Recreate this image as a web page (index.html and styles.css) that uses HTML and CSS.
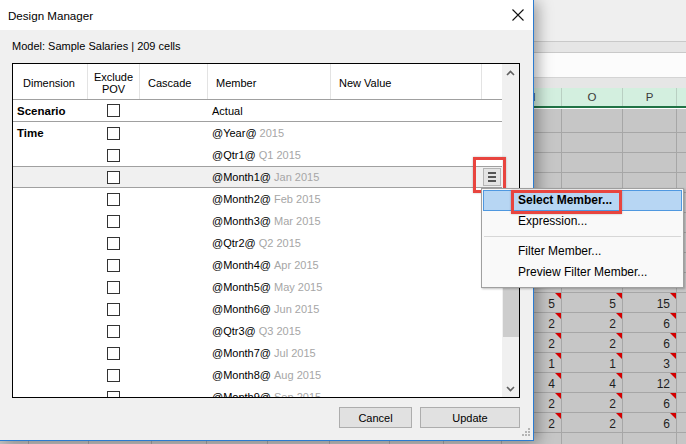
FILE: index.html
```html
<!DOCTYPE html>
<html>
<head>
<meta charset="utf-8">
<link rel="stylesheet" href="styles.css">
</head>
<body>
<div class="sheet">
  <div class="ribbon"></div>
  <div class="strip"></div>
  <div class="fbar"></div>
  <div class="strip2"></div>
  <div class="colhdr">
    <i class="rh"></i><i>F</i><i>G</i><i>H</i><i>I</i><i>J</i><i>K</i><i>L</i><i>M</i><i>N</i><i>O</i><i>P</i><i></i>
  </div>
  <div class="cells">
    <i></i><i></i><i></i><i></i><i></i><i></i><i></i><i></i><i></i><i></i><i></i><i></i><i></i>
    <i></i><i></i><i></i><i></i><i></i><i></i><i></i><i></i><i></i><i></i><i></i><i></i><i></i>
    <i></i><i></i><i></i><i></i><i></i><i></i><i></i><i></i><i></i><i></i><i></i><i></i><i></i>
    <i></i><i></i><i></i><i></i><i></i><i></i><i></i><i></i><i></i><i></i><i></i><i></i><i></i>
    <i></i><i></i><i></i><i></i><i></i><i></i><i></i><i></i><i></i><i></i><i></i><i></i><i></i>
    <i></i><i></i><i></i><i></i><i></i><i></i><i></i><i></i><i></i><i></i><i></i><i></i><i></i>
    <i></i><i></i><i></i><i></i><i></i><i></i><i></i><i></i><i></i><i></i><i></i><i></i><i></i>
    <i></i><i></i><i></i><i></i><i></i><i></i><i></i><i></i><i></i><i></i><i></i><i></i><i></i>
    <i></i><i></i><i></i><i></i><i></i><i></i><i></i><i></i><i></i><i class="n">10</i><i class="n">10</i><i class="n">30</i><i></i>
    <i></i><i></i><i></i><i></i><i></i><i></i><i></i><i></i><i></i><i class="n">5</i><i class="n">5</i><i class="n">15</i><i></i>
    <i></i><i></i><i></i><i></i><i></i><i></i><i></i><i></i><i></i><i class="n">2</i><i class="n">2</i><i class="n">6</i><i></i>
    <i></i><i></i><i></i><i></i><i></i><i></i><i></i><i></i><i></i><i class="n">2</i><i class="n">2</i><i class="n">6</i><i></i>
    <i></i><i></i><i></i><i></i><i></i><i></i><i></i><i></i><i></i><i class="n">1</i><i class="n">1</i><i class="n">3</i><i></i>
    <i></i><i></i><i></i><i></i><i></i><i></i><i></i><i></i><i></i><i class="n">4</i><i class="n">4</i><i class="n">12</i><i></i>
    <i></i><i></i><i></i><i></i><i></i><i></i><i></i><i></i><i></i><i class="n">2</i><i class="n">2</i><i class="n">6</i><i></i>
    <i></i><i></i><i></i><i></i><i></i><i></i><i></i><i></i><i></i><i class="n">2</i><i class="n">2</i><i class="n">6</i><i></i>
    <i></i><i></i><i></i><i></i><i></i><i></i><i></i><i></i><i></i><i></i><i></i><i></i><i></i>
  </div>
</div>

<div class="dialog">
  <div class="titlebar">
    <span>Design Manager</span>
    <svg class="close" width="12" height="12" viewBox="0 0 12 12"><path d="M0.5 0.5 L11.5 11.5 M11.5 0.5 L0.5 11.5" stroke="#111" stroke-width="1.1" fill="none"/></svg>
  </div>
  <div class="dbody">
    <div class="model">Model: Sample Salaries | 209 cells</div>
    <div class="tablebox">
      <div class="list">
        <div class="hdr">
          <div class="c1 hc hc1">Dimension</div>
          <div class="c2 hc hcc">Exclude<br>POV</div>
          <div class="c3 hc">Cascade</div>
          <div class="c4 hc">Member</div>
          <div class="c5 hc">New Value</div>
          <div class="c6 hc"></div>
        </div>
        <div class="row sep"><div class="c1 dim">Scenario</div><div class="c2"><span class="cb"></span></div><div class="c3"></div><div class="c4 mem">Actual</div></div>
        <div class="row"><div class="c1 dim">Time</div><div class="c2"><span class="cb"></span></div><div class="c3"></div><div class="c4 mem">@Year@ <span class="dt">2015</span></div></div>
        <div class="row"><div class="c1"></div><div class="c2"><span class="cb"></span></div><div class="c3"></div><div class="c4 mem">@Qtr1@ <span class="dt">Q1 2015</span></div></div>
        <div class="row sel"><div class="c1"></div><div class="c2"><span class="cb"></span></div><div class="c3"></div><div class="c4 mem">@Month1@ <span class="dt">Jan 2015</span></div><div class="c5"></div><div class="c6"><span class="mbtn"><b></b><b></b><b></b></span></div></div>
        <div class="row"><div class="c1"></div><div class="c2"><span class="cb"></span></div><div class="c3"></div><div class="c4 mem">@Month2@ <span class="dt">Feb 2015</span></div></div>
        <div class="row"><div class="c1"></div><div class="c2"><span class="cb"></span></div><div class="c3"></div><div class="c4 mem">@Month3@ <span class="dt">Mar 2015</span></div></div>
        <div class="row"><div class="c1"></div><div class="c2"><span class="cb"></span></div><div class="c3"></div><div class="c4 mem">@Qtr2@ <span class="dt">Q2 2015</span></div></div>
        <div class="row"><div class="c1"></div><div class="c2"><span class="cb"></span></div><div class="c3"></div><div class="c4 mem">@Month4@ <span class="dt">Apr 2015</span></div></div>
        <div class="row"><div class="c1"></div><div class="c2"><span class="cb"></span></div><div class="c3"></div><div class="c4 mem">@Month5@ <span class="dt">May 2015</span></div></div>
        <div class="row"><div class="c1"></div><div class="c2"><span class="cb"></span></div><div class="c3"></div><div class="c4 mem">@Month6@ <span class="dt">Jun 2015</span></div></div>
        <div class="row"><div class="c1"></div><div class="c2"><span class="cb"></span></div><div class="c3"></div><div class="c4 mem">@Qtr3@ <span class="dt">Q3 2015</span></div></div>
        <div class="row"><div class="c1"></div><div class="c2"><span class="cb"></span></div><div class="c3"></div><div class="c4 mem">@Month7@ <span class="dt">Jul 2015</span></div></div>
        <div class="row"><div class="c1"></div><div class="c2"><span class="cb"></span></div><div class="c3"></div><div class="c4 mem">@Month8@ <span class="dt">Aug 2015</span></div></div>
        <div class="row"><div class="c1"></div><div class="c2"><span class="cb"></span></div><div class="c3"></div><div class="c4 mem">@Month9@ <span class="dt">Sep 2015</span></div></div>
      </div>
      <div class="sb">
        <div class="arrow"><svg width="9" height="6" viewBox="0 0 9 6"><path d="M1 5 L4.5 1.5 L8 5" stroke="#606060" stroke-width="1.6" fill="none"/></svg></div>
        <div class="track1"></div>
        <div class="thumb"></div>
        <div class="track2"></div>
        <div class="arrow"><svg width="9" height="6" viewBox="0 0 9 6"><path d="M1 1 L4.5 4.5 L8 1" stroke="#606060" stroke-width="1.6" fill="none"/></svg></div>
      </div>
    </div>
    <div class="btns">
      <button class="btn cancel">Cancel</button>
      <button class="btn update">Update</button>
    </div>
  </div>
  <svg class="grip" width="9" height="9" viewBox="0 0 9 9">
    <rect x="6" y="0" width="2" height="2" fill="#b5b5b5"/>
    <rect x="3" y="3" width="2" height="2" fill="#b5b5b5"/>
    <rect x="6" y="3" width="2" height="2" fill="#b5b5b5"/>
    <rect x="0" y="6" width="2" height="2" fill="#b5b5b5"/>
    <rect x="3" y="6" width="2" height="2" fill="#b5b5b5"/>
    <rect x="6" y="6" width="2" height="2" fill="#b5b5b5"/>
  </svg>
</div>

<div class="redbox rb1"></div>

<div class="menu">
  <div class="item active">Select Member...</div>
  <div class="item">Expression...</div>
  <div class="msep"></div>
  <div class="item">Filter Member...</div>
  <div class="item">Preview Filter Member...</div>
</div>
<div class="redbox rb2"></div>
</body>
</html>
```

FILE: styles.css
```css
* { box-sizing: border-box; }
html, body { margin: 0; padding: 0; }
body {
  width: 686px;
  height: 444px;
  overflow: hidden;
  position: relative;
  font-family: "Liberation Sans", Arial, sans-serif;
  font-size: 11px;
  color: #000;
  background: #c6c6c6;
}

/* ---------- spreadsheet behind ---------- */
.sheet { width: 686px; }
.ribbon { height: 42px; background: #efefef; border-bottom: 1px solid #c9c9c9; }
.strip { height: 11px; background: #e6e6e6; border-bottom: 1px solid #c9c9c9; }
.fbar { height: 25px; background: #fcfcfc; border-bottom: 1px solid #d4d4d4; }
.strip2 { height: 10px; background: #e6e6e6; }
.colhdr, .cells {
  display: grid;
  grid-template-columns: 29px 60px 63px 55px 61px 62px 60px 54px 58px 60px 61px 54px 60px;
}
.colhdr {
  height: 20px;
  background: #d3efdf;
  border-bottom: 2px solid #217346;
}
.colhdr i {
  font-style: normal;
  font-size: 11.5px;
  color: #3a3a3a;
  text-align: center;
  line-height: 18px;
  border-right: 1px solid #b9cfc2;
}
.colhdr .rh { background: #e6e6e6; }
.cells {
  border-top: 1px solid #ffffff;
  grid-template-rows: 24px;
  grid-auto-rows: 20px;
}
.cells i {
  font-style: normal;
  background: #c6c6c6;
  border-right: 1px solid #a6a6a6;
  border-bottom: 1px solid #a6a6a6;
}
.cells .n {
  position: relative;
  text-align: right;
  padding: 3px 6px 0 0;
  font-size: 12px;
  line-height: 17px;
  color: #1e1e1e;
}
.cells .n::after {
  content: "";
  position: absolute;
  top: 0;
  right: 0;
  border-left: 6px solid transparent;
  border-top: 6px solid #d40000;
}

/* ---------- dialog ---------- */
.dialog {
  position: absolute;
  left: 0;
  top: 0;
  width: 534px;
  height: 441px;
  background: #f0f0f0;
  border-right: 1px solid #2b7bd0;
  border-bottom: 1px solid #2b7bd0;
  box-shadow: 4px 2px 14px rgba(0, 0, 0, 0.35);
  display: flex;
  flex-direction: column;
}
.titlebar {
  height: 30px;
  background: #fff;
  display: flex;
  align-items: center;
  justify-content: space-between;
  padding: 0 9px 0 8px;
  font-size: 11.6px;
}
.close { display: block; }
.dbody {
  flex: 1;
  display: flex;
  flex-direction: column;
  padding: 0 13px 0 12px;
}
.model {
  padding-top: 10px;
  height: 23px;
  line-height: 13px;
}
.tablebox {
  margin-top: 10px;
  height: 335px;
  border: 1px solid #000;
  background: #fff;
  display: flex;
}
.list {
  width: 490px;
  overflow: hidden;
}
.hdr {
  display: flex;
  height: 36px;
  border-bottom: 1px solid #a0a0a0;
}
.c1 { width: 75px; flex: none; }
.c2 { width: 52px; flex: none; }
.c3 { width: 68px; flex: none; }
.c4 { width: 123px; flex: none; }
.c5 { width: 151px; flex: none; }
.c6 { width: 21px; flex: none; }
.hc {
  border-right: 1px solid #e3e3e3;
  display: flex;
  align-items: center;
  padding: 3px 0 0 8px;
  line-height: 12px;
}
.hc1 { padding-left: 10px; }
.hcc { justify-content: center; text-align: center; padding-left: 0; }
.row {
  display: flex;
  align-items: center;
  height: 22px;
  white-space: nowrap;
}
.row.sep { border-bottom: 1px solid #a0a0a0; }
.row.sel {
  background: #f0f0f0;
  border-top: 1px solid #a0a0a0;
  border-bottom: 1px solid #a0a0a0;
}
.row > div { display: flex; align-items: center; }
.dim { font-weight: bold; padding-left: 4px; font-size: 11.5px; }
.mem { padding-left: 4px; }
.dt { color: #a6a6a6; margin-left: 3px; }
.cb {
  display: block;
  width: 13px;
  height: 13px;
  margin-left: 19px;
  border: 1px solid #333;
  background: #fff;
}
.mbtn {
  display: flex;
  flex-direction: column;
  align-items: center;
  gap: 2px;
  width: 18px;
  height: 18px;
  margin-left: 1px;
  padding-top: 3px;
  background: #e4e4e4;
  border: 1px solid #b4b4b4;
}
.mbtn b {
  display: block;
  width: 8px;
  height: 2px;
  background: #555;
}
.sb {
  width: 17px;
  background: #f0f0f0;
  display: flex;
  flex-direction: column;
}
.arrow {
  height: 17px;
  display: flex;
  align-items: center;
  justify-content: center;
}
.arrow svg { display: block; }
.track1 { height: 109px; }
.thumb { height: 147px; margin-left: 1px; background: #cdcdcd; }
.track2 { flex: 1; }
.btns {
  display: flex;
  justify-content: flex-end;
  gap: 8px;
  margin-top: 9px;
}
.btn {
  height: 21px;
  padding: 0;
  background: #e1e1e1;
  border: 1px solid #adadad;
  font-family: "Liberation Sans", Arial, sans-serif;
  font-size: 11px;
  color: #000;
}
.cancel { width: 73px; }
.update { width: 100px; }
.grip { position: absolute; right: 2px; bottom: 3px; }

/* ---------- overlays ---------- */
.redbox {
  position: absolute;
  border: 3px solid #e8453f;
  box-shadow: 0 0 2px rgba(0, 0, 0, 0.25);
}
.rb1 { left: 473px; top: 157px; width: 33px; height: 36px; }
.rb2 { left: 511px; top: 190px; width: 111px; height: 24px; }

.menu {
  position: absolute;
  left: 481px;
  top: 188px;
  width: 203px;
  height: 100px;
  border: 1px solid #a0a0a0;
  background: #f9f9f9;
  padding: 1px;
  box-shadow: 1px 1px 2px rgba(0, 0, 0, 0.25);
  font-size: 12px;
}
.item {
  height: 21px;
  line-height: 19px;
  padding-left: 34px;
  border: 1px solid transparent;
  white-space: nowrap;
}
.item.active {
  background: #b7d6f3;
  border-color: #4f98e0;
  font-weight: bold;
}
.msep {
  height: 9px;
  padding-top: 4px;
  margin: 0 1px;
}
.msep::before {
  content: "";
  display: block;
  height: 1px;
  background: #d7d7d7;
}
```
